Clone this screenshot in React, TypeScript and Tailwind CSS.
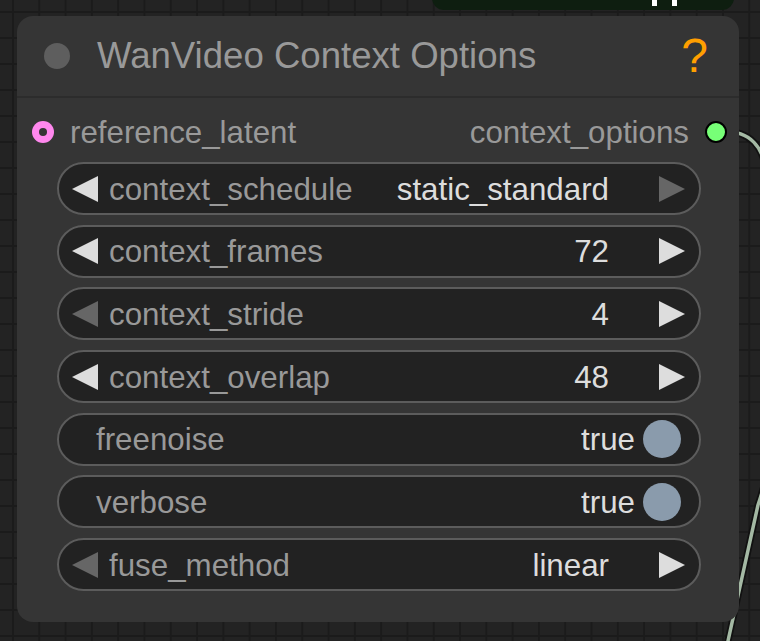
import React from 'react';

const FONT = "font-['Liberation_Sans',Arial,sans-serif]";

const Tri: React.FC<{ dir: 'left' | 'right'; dim?: boolean }> = ({ dir, dim }) => (
  <svg width="26" height="26" viewBox="0 0 26 26" className="shrink-0">
    <polygon
      points={dir === 'left' ? '26,0 26,26 0,13' : '0,0 0,26 26,13'}
      fill={dim ? '#666666' : '#dddddd'}
    />
  </svg>
);

type Combo = { kind: 'combo'; label: string; value: string; leftDim?: boolean; rightDim?: boolean };
type Toggle = { kind: 'toggle'; label: string; value: string };

const widgets: (Combo | Toggle)[] = [
  { kind: 'combo', label: 'context_schedule', value: 'static_standard', rightDim: true },
  { kind: 'combo', label: 'context_frames', value: '72' },
  { kind: 'combo', label: 'context_stride', value: '4', leftDim: true },
  { kind: 'combo', label: 'context_overlap', value: '48' },
  { kind: 'toggle', label: 'freenoise', value: 'true' },
  { kind: 'toggle', label: 'verbose', value: 'true' },
  { kind: 'combo', label: 'fuse_method', value: 'linear', leftDim: true },
];

const Widget: React.FC<{ w: Combo | Toggle }> = ({ w }) => {
  if (w.kind === 'toggle') {
    return (
      <div className="h-[53px] rounded-full border-2 border-[#5c5c5c] bg-[#222222] flex items-center pl-[37px] pr-[18px] text-[31.3px]">
        <span className="pt-[3px] text-[#999999]">{w.label}</span>
        <span className="pt-[3px] ml-auto text-[#dddddd]">{w.value}</span>
        <span className="ml-[8px] w-[38px] h-[38px] rounded-full bg-[#8a9bac]" />
      </div>
    );
  }
  return (
    <div className="h-[53px] rounded-full border-2 border-[#5c5c5c] bg-[#222222] flex items-center pl-[13px] pr-[14px] text-[31.3px]">
      <Tri dir="left" dim={w.leftDim} />
      <span className="pt-[3px] ml-[11px] text-[#999999]">{w.label}</span>
      <span className="pt-[3px] ml-auto text-[#dddddd]">{w.value}</span>
      <span className="ml-[50px]">
        <Tri dir="right" dim={w.rightDim} />
      </span>
    </div>
  );
};

export default function App() {
  return (
    <div
      className={`${FONT} relative w-[760px] h-[641px] overflow-hidden bg-[#232323] bg-[linear-gradient(#1b1b1b_2px,transparent_2px),linear-gradient(90deg,#1b1b1b_2px,transparent_2px)] bg-[size:26.3px_26px] bg-[position:12px_11px]`}
    >
      {/* node above, mostly off screen */}
      <div className="absolute left-[432px] top-[-20px] w-[302px] h-[30px] rounded-[12px] bg-[#0e1e10]">
        <div className="absolute left-[220px] top-[20px] w-[5px] h-[6px] bg-white" />
        <div className="absolute left-[240px] top-[20px] w-[5px] h-[6px] bg-white" />
      </div>

      {/* link wire */}
      <svg className="absolute inset-0" width="760" height="641" viewBox="0 0 760 641">
        <path
          d="M722,131 C750,131 764,145 768,180 L775,380 C777,430 770,470 758,505 L726,650"
          fill="none"
          stroke="#111111"
          strokeWidth="7"
        />
        <path
          d="M722,131 C750,131 764,145 768,180 L775,380 C777,430 770,470 758,505 L726,650"
          fill="none"
          stroke="#a4b9a4"
          strokeWidth="3.5"
        />
      </svg>

      {/* main node */}
      <div className="absolute left-[17px] top-[16px] w-[722px] h-[606px] rounded-[16px] bg-[#353535] flex flex-col">
        <div className="h-[82px] shrink-0 flex items-center border-b-2 border-[#2c2c2c] pl-[27px] pr-[31px]">
          <span className="w-[26px] h-[26px] rounded-full bg-[#5e5e5e]" />
          <span className="ml-[27px] text-[36.6px] text-[#999999] leading-none">WanVideo Context Options</span>
          <span className="ml-auto text-[48px] text-[#ff9f00] leading-none">?</span>
        </div>

        <div className="flex flex-col pt-[8px] pb-[31px]">
          <div className="h-[52px] flex items-center pl-[15px] pr-[12px] text-[31.3px]">
            <span className="w-[22px] h-[22px] rounded-full bg-[#ff88ee] flex items-center justify-center">
              <span className="w-[8px] h-[8px] rounded-full bg-[#353535]" />
            </span>
            <span className="pt-[2px] ml-[16px] text-[#999999]">reference_latent</span>
            <span className="pt-[2px] ml-auto text-[#999999]">context_options</span>
            <span className="ml-[16px] w-[22px] h-[22px] rounded-full bg-[#77ff77] border-2 border-black" />
          </div>

          <div className="mt-[4px] ml-[40px] mr-[38px] flex flex-col gap-[9.7px]">
            {widgets.map((w) => (
              <Widget key={w.label} w={w} />
            ))}
          </div>
        </div>
      </div>
    </div>
  );
}
